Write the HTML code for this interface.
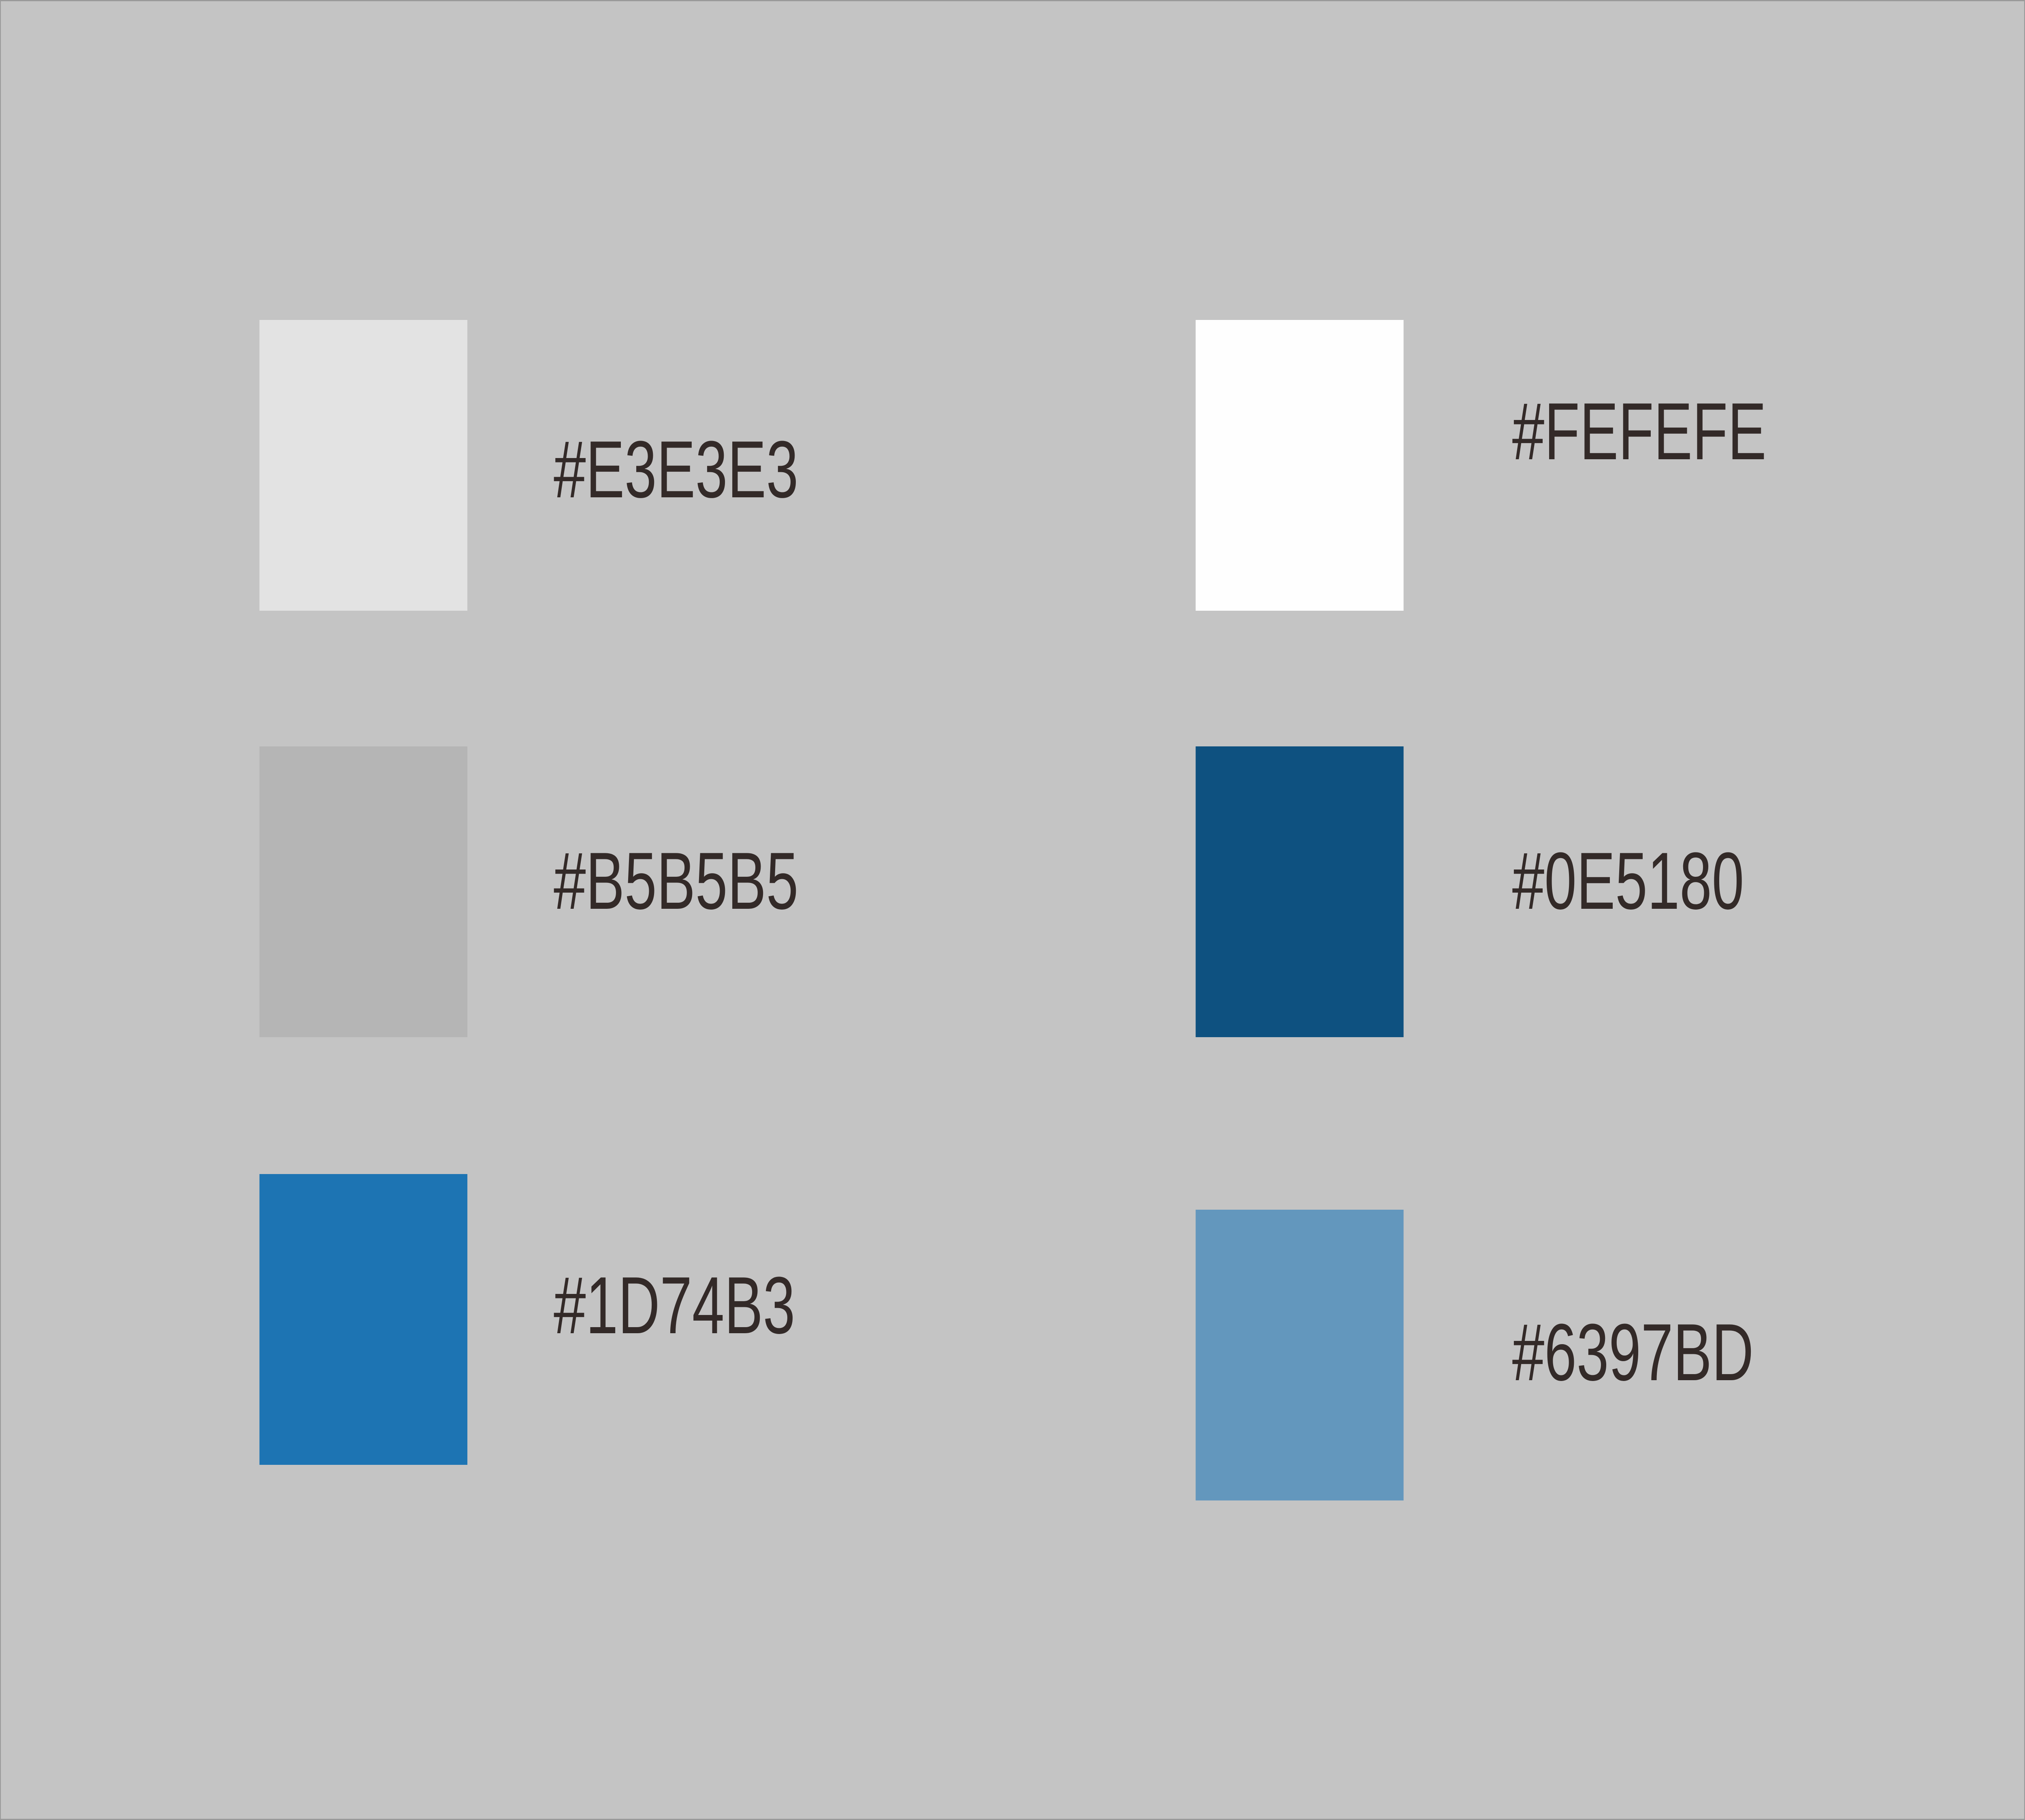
<!DOCTYPE html>
<html><head><meta charset="utf-8"><style>html,body{margin:0;padding:0;background:#c4c4c4;width:100%;height:100%;overflow:hidden}svg{display:block;width:100vw;height:100vh}</style></head>
<body>
<svg xmlns="http://www.w3.org/2000/svg" viewBox="0 0 6993 4494" preserveAspectRatio="none">
<rect x="0" y="0" width="6993" height="4494" fill="#c4c4c4" stroke="#9a9a9a" stroke-width="6"/>
<rect x="896" y="790" width="718" height="718" fill="#e3e3e3"/>
<rect x="896" y="1843" width="718" height="718" fill="#b5b5b5"/>
<rect x="896" y="2899" width="718" height="718" fill="#1d74b3"/>
<rect x="4129" y="790" width="718" height="718" fill="#fefefe"/>
<rect x="4129" y="1843" width="718" height="718" fill="#0e5180"/>
<rect x="4129" y="2987" width="718" height="718" fill="#6397bd"/>
<g font-family="Liberation Sans, Arial, sans-serif" font-size="200" fill="#332a28">
<text x="1912" y="1228">#E3E3E3</text>
<text x="1912" y="2244">#B5B5B5</text>
<text x="1912" y="3292">#1D74B3</text>
<text x="5222" y="1134">#FEFEFE</text>
<text x="5222" y="2244">#0E5180</text>
<text x="5222" y="3408">#6397BD</text>
</g>
</svg>
</body></html>
